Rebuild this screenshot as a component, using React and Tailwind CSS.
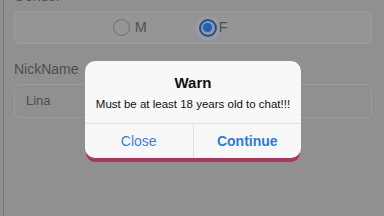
export default function App() {
  return (
    <div className="relative h-[216px] w-[384px] overflow-hidden bg-[#909090] font-['Liberation_Sans',Arial,sans-serif]">
      {/* left edge line */}
      <div className="absolute left-[3px] top-0 h-full w-px bg-[#7a7a7a]" />

      <div className="flex flex-col px-[14px] pr-[12px]">
        <div className="-mt-[13px] h-[19px] text-[14px] leading-[19px] text-[#4e4e4e]">Gender</div>
        <div className="mt-[5px] flex h-[33px] items-center rounded-[5px] border border-[#9c9c9c] bg-[#959595] pl-[98px]">
          <span className="h-[17px] w-[17px] rounded-full border border-[#6e6e6e] bg-[#959595]" />
          <span className="ml-[5px] text-[14px] text-[#4e4e4e]">M</span>
          <span className="ml-[52px] flex h-[18px] w-[18px] items-center justify-center rounded-full border-2 border-[#1f4fa0] bg-[#959595] shadow-[0_0_0_3px_rgba(160,170,190,0.35)]">
            <span className="h-[9px] w-[9px] rounded-full bg-[#1e5fc0]" />
          </span>
          <span className="ml-[2px] text-[14px] text-[#4e4e4e]">F</span>
        </div>
        <div className="mt-[16px] text-[14px] leading-[19px] text-[#4e4e4e]">NickName</div>
        <div className="mt-[5px] flex h-[34px] items-center rounded-[5px] border border-[#9c9c9c] bg-[#909090] pl-[11px] text-[13px] text-[#4e4e4e]">
          Lina
        </div>
      </div>

      {/* dialog */}
      <div className="absolute left-[85px] top-[61px] w-[216px] rounded-[10px] bg-[#f9f8f8] shadow-[0_5px_0_-1px_#a8395a]">
        <div className="pt-[13px] text-center text-[15px] font-bold leading-[18px] text-[#111]">Warn</div>
        <div className="mt-[5px] text-center text-[11.5px] leading-[15px] text-[#111]">
          Must be at least 18 years old to chat!!!
        </div>
        <div className="mt-[11px] flex h-[35px] border-t border-[#e2e0e0]">
          <div className="flex flex-1 items-center justify-center border-r border-[#e2e0e0] text-[14px] text-[#3b7fd8]">
            Close
          </div>
          <div className="flex flex-1 items-center justify-center text-[14px] font-bold text-[#2f7ad8]">
            Continue
          </div>
        </div>
      </div>
    </div>
  )
}
